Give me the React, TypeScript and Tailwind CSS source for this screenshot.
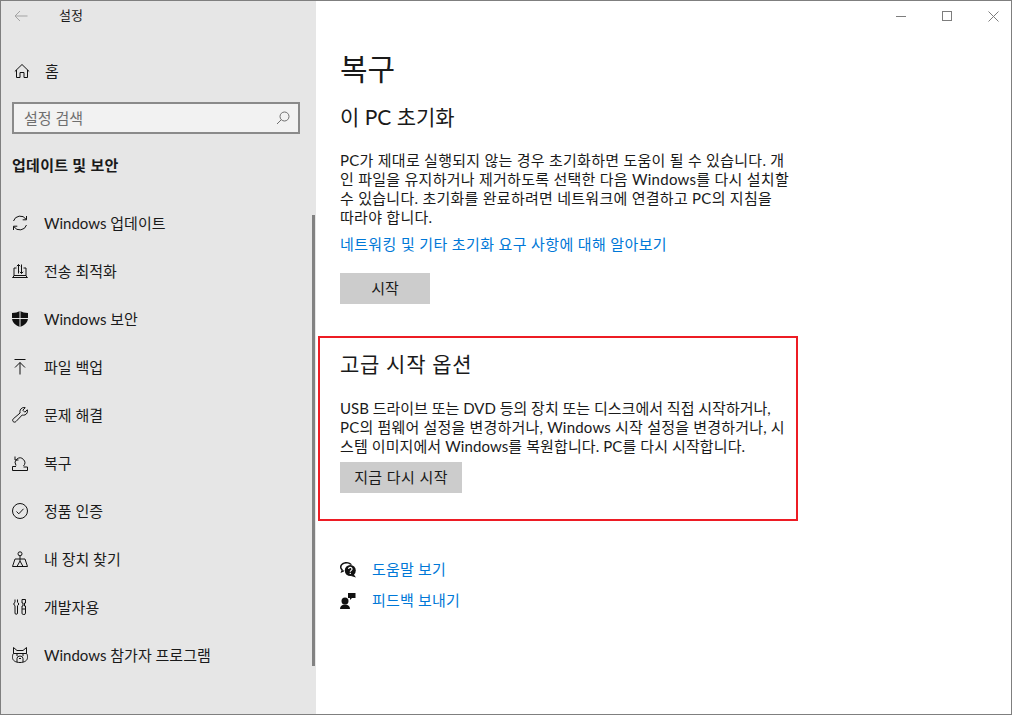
import React from "react";

const S = { fill: "none", stroke: "currentColor", strokeWidth: 1 } as const;

const Ic = ({ children }: { children: React.ReactNode }) => (
  <svg width="16" height="16" viewBox="0 0 16 16" className="text-[#111111] shrink-0">{children}</svg>
);

const icons: Record<string, React.ReactNode> = {
  update: (
    <g {...S}>
      <path d="M1.500 6A7 7 0 0 1 14 4.200" />
      <path d="M14.500 1v3.800h-3.800" />
      <path d="M14.500 10A7 7 0 0 1 2 11.800" />
      <path d="M1.500 15v-3.800h3.800" />
    </g>
  ),
  delivery: (
    <g {...S}>
      <path d="M0.500 14.500h15M0.500 14.500l1.500-1.500v-8h2.500M15.500 14.500L14 13V5h-2.500M2 12.500h12" />
      <path d="M6.500 10.500V1.500M4.800 3.200l1.700-1.700 1.700 1.700M9.500 10.500V1.500M7.800 8.800l1.700 1.700 1.700-1.700" />
    </g>
  ),
  shield: (
    <g>
      <path
        d="M8 0c2.200 1.300 4.800 2 8 2v5c0 4.300-3.300 7.300-8 9C3.300 14.300 0 11.300 0 7V2c3.200 0 5.800-.7 8-2z"
        fill="currentColor"
      />
      <path d="M8 0v16M0 7.500h16" stroke="#e6e6e6" strokeWidth="1" />
    </g>
  ),
  backup: <path {...S} d="M2.500 0.500h11M8 15.500V3.500M3 8.500l5-5 5 5" />,
  wrench: (
    <path
      {...S}
      d="M15.500 4.200c0 2.200-1.800 4-4 4-.5 0-.9-.1-1.300-.2L4 14.500c-.8.800-2 .9-2.800.1s-.7-2 .1-2.800L8.100 6c-.1-.4-.2-.8-.2-1.300 0-2.200 1.800-4.200 4-4.200.5 0 .9.100 1.300.2L10.800 3.200l2 2L15.300 2.800c.1.400.2.900.2 1.400z"
    />
  ),
  recovery: (
    <g {...S}>
      <path d="M0.500 15.500V11.500h3.500M15.500 12v3.500H0.500M15.500 12H11.500" />
      <path d="M4 11.500A4.800 4.800 0 1 1 11.500 12" transform="translate(0 -1)" />
      <path d="M3 1.500v3.500h3.500" />
    </g>
  ),
  check: (
    <g {...S}>
      <circle cx="8" cy="8" r="7.500" />
      <path d="M4.500 8.500l2.300 2.300 4.700-5" />
    </g>
  ),
  find: (
    <g {...S}>
      <circle cx="8" cy="2.800" r="2" />
      <path d="M8 4.800V10M0.500 15.500h15L13 8H3zM5 15.500l3-5.500 3 5.500" />
    </g>
  ),
  dev: (
    <g {...S}>
      <path d="M3 .5v2.800c-.7.300-1.200 1-1.200 1.700S2.300 6.400 3 6.700V14a1.200 1.200 0 0 0 2.500 0V6.700c.7-.3 1.200-1 1.200-1.700s-.5-1.400-1.200-1.700V.5" />
      <path d="M10 .5h3.500v3.500h-1V7h1v7.200a1.700 1.300 0 0 1-3.500 0V7h1V4h-1zM10 10h3.500" />
    </g>
  ),
  insider: (
    <g {...S}>
      <path d="M1.500 .5l3.500 3h6l3.500-3v6c1 1 1 2.500 1 4 0 3-3 5-7.500 5S.5 13.500.5 10.500c0-1.500 0-3 1-4z" />
      <path d="M1.500 6.500h13M5 15v-3.500a3 2.500 0 0 1 6 0V15M5 6.500v2.500M11 6.500v2.500M7 11.500h2" />
    </g>
  ),
};

const items = [
  ["update", "Windows 업데이트"],
  ["delivery", "전송 최적화"],
  ["shield", "Windows 보안"],
  ["backup", "파일 백업"],
  ["wrench", "문제 해결"],
  ["recovery", "복구"],
  ["check", "정품 인증"],
  ["find", "내 장치 찾기"],
  ["dev", "개발자용"],
  ["insider", "Windows 참가자 프로그램"],
];

const font = { fontFamily: "Lato,'Noto Sans CJK KR',sans-serif" };

export default function App() {
  return (
    <div
      className="relative flex h-[715px] w-[1012px] overflow-hidden border border-[#7f7f7f] bg-white text-[15px] leading-[19px] text-[#1a1a1a]"
      style={font}
    >
      <aside className="relative flex w-[315px] shrink-0 flex-col bg-[#e6e6e6]">
        <div className="flex h-[29px] items-center pl-[13px]">
          <svg width="14" height="12" viewBox="0 0 14 12" className="text-[#a3a3a3]">
            <path {...S} d="M13.500 6H1M6 1L1 6l5 5" />
          </svg>
          <span className="ml-[31px] text-[13px]">설정</span>
        </div>
        <div className="mt-[25px] flex h-[32px] items-center pl-[13px]">
          <svg width="16" height="16" viewBox="0 0 16 16" className="text-[#111111]">
            <path {...S} d="M.8 8.500L8 1.500l7.200 7M2.500 7v7.500h3.500v-5h4v5h3.500V7" />
          </svg>
          <span className="ml-[15px]">홈</span>
        </div>
        <div className="ml-[11px] mt-[15px] flex h-[32px] w-[288px] items-center justify-between border-2 border-[#8a8a8a] bg-[#f2f2f2] pl-[10px] pr-[8px] text-[#6f6f6f]">
          <span>설정 검색</span>
          <svg width="14" height="14" viewBox="0 0 14 14" className="text-[#6f6f6f]">
            <circle {...S} cx="8.500" cy="5.500" r="4.500" />
            <path {...S} d="M5.300 8.700L1 13" />
          </svg>
        </div>
        <div className="ml-[11px] mt-[21px] text-[15px] font-bold leading-[20px] tracking-[0.3px]">업데이트 및 보안</div>
        <nav className="mt-[24px] flex flex-col">
          {items.map(([k, t]) => (
            <div key={k} className="flex h-[48px] items-center pl-[11px]">
              <Ic>{icons[k]}</Ic>
              <span className="ml-[16px]">{t}</span>
            </div>
          ))}
        </nav>
        <div className="absolute left-[311px] top-[214px] h-[451px] w-[3px] bg-[#828282]" />
      </aside>

      <main className="relative flex-1">
        <div className="absolute right-0 top-0 flex h-[30px] items-center gap-[36px] pr-[12px]">
          <div className="h-px w-[10px] bg-[#7d7d7d]" />
          <div className="h-[10px] w-[10px] border border-[#7d7d7d]" />
          <svg width="11" height="11" viewBox="0 0 11 11" className="text-[#7d7d7d]">
            <path {...S} d="M0.500 0.500l10 10M10.500 0.500l-10 10" />
          </svg>
        </div>

        <div className="pl-[24px] pt-[46px]">
          <h1 className="text-[30px] font-normal leading-[42px]">복구</h1>
          <h2 className="mt-[14px] text-[21px] font-normal leading-[28px]">이 PC 초기화</h2>
          <p className="mt-[20px] whitespace-nowrap tracking-[0.27px]">
            PC가 제대로 실행되지 않는 경우 초기화하면 도움이 될 수 있습니다. 개<br />
            인 파일을 유지하거나 제거하도록 선택한 다음 Windows를 다시 설치할<br />
            수 있습니다. 초기화를 완료하려면 네트워크에 연결하고 PC의 지침을<br />
            따라야 합니다.
          </p>
          <a className="mt-[8px] block tracking-[0.37px] text-[#0078d7]">네트워킹 및 기타 초기화 요구 사항에 대해 알아보기</a>
          <button className="mt-[19px] block h-[31px] w-[90px] bg-[#cccccc]">시작</button>
        </div>

        <section className="ml-[2px] mt-[32px] h-[185px] w-[480px] border-2 border-[#ed1c24] pl-[20px] pt-[12px]">
          <h2 className="text-[21px] font-normal leading-[28px] tracking-[0.7px]">고급 시작 옵션</h2>
          <p className="mt-[21px] whitespace-nowrap">
            USB 드라이브 또는 DVD 등의 장치 또는 디스크에서 직접 시작하거나,<br />
            <span className="tracking-[0.2px]">PC의 펌웨어 설정을 변경하거나, Windows 시작 설정을 변경하거나, 시</span><br />
            <span className="tracking-[0.1px]">스템 이미지에서 Windows를 복원합니다. PC를 다시 시작합니다.</span>
          </p>
          <button className="mt-[6px] block h-[31px] w-[122px] bg-[#cccccc] tracking-[0.4px]">지금 다시 시작</button>
        </section>

        <div className="ml-[24px] mt-[39px] flex flex-col gap-[12px] text-[#0078d7]">
          <div className="flex h-[19px] items-center gap-[16px]">
            <svg width="16" height="16" viewBox="0 0 16 16" className="text-[#111111]">
              <path d="M6.500 0C3 0 0 2.300 0 5c0 1.300.6 2.400 1.500 3.200L.5 11l3.500-1.500-.5-1.500-1 .4.300-1.200C1.900 6.900 1.500 6 1.500 5c0-2 2.300-3.500 5-3.500 1.500 0 2.800.5 3.700 1.200h1.800C10.900 1 8.900 0 6.500 0z" fill="currentColor" />
              <circle cx="10.300" cy="8.500" r="5.500" fill="currentColor" />
              <path d="M13.500 12l2.500 3.500-5-1.500z" fill="currentColor" />
              <path d="M8.600 7a1.700 1.700 0 1 1 2.500 1.500c-.6.300-.8.700-.8 1.300" fill="none" stroke="#fff" strokeWidth="1.200" />
              <rect x="9.700" y="10.800" width="1.200" height="1.200" fill="#fff" />
            </svg>
            <a className="tracking-[0.2px]">도움말 보기</a>
          </div>
          <div className="flex h-[19px] items-center gap-[16px]">
            <svg width="16" height="16" viewBox="0 0 16 16" className="text-[#111111]">
              <circle cx="5" cy="8" r="3.500" fill="currentColor" />
              <path d="M0 16c0-3 2-4.500 5-4.500s5 1.500 5 4.500z" fill="currentColor" />
              <path d="M8 0h7.500v5H12l-2 2V5H8z" fill="currentColor" />
            </svg>
            <a className="tracking-[0.2px]">피드백 보내기</a>
          </div>
        </div>
      </main>
    </div>
  );
}
